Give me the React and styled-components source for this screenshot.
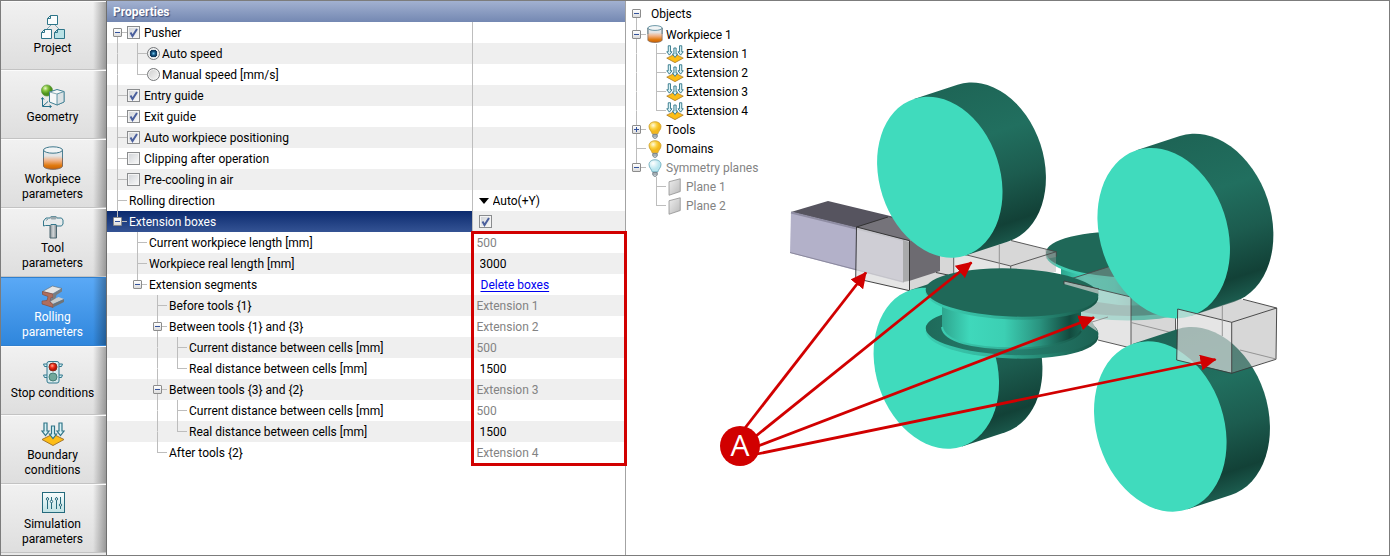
import React, { useState } from "react";
import styled, { createGlobalStyle, css } from "styled-components";

const FONT = 'Roboto, "Open Sans", sans-serif';
const LINE = "#bdbdbd";
const RED = "#d10000";

const GlobalStyle = createGlobalStyle`
  *, *::before, *::after { box-sizing: border-box; }
  body { margin: 0; background: #fff; font-family: ${FONT}; font-size: 12px; line-height: 15px; color: #000; }
  button, input, select { font: inherit; color: inherit; margin: 0; }
`;

const Window = styled.main`
  display: flex;
  min-height: 100vh;
  border: 1px solid #7c7c7c;
  background: #fff;
`;

/* ---------- sidebar ---------- */

const Sidebar = styled.nav`
  flex: 0 0 106px;
  height: calc(100vh - 2px);
  overflow: hidden;
  border-right: 1px solid #6f6f6f;
  background: #e9e9e9;
`;

const NavButton = styled.button`
  display: flex;
  flex-direction: column;
  align-items: center;
  justify-content: center;
  gap: 2px;
  width: 100%;
  height: 69px;
  padding: 0 2px 0 0;
  border: 0;
  border-top: 1px solid #fbfbfb;
  border-bottom: 1px solid #c3c3c3;
  background:
    linear-gradient(to right, transparent 92px, rgba(0, 0, 0, 0.32)),
    linear-gradient(#f1f1f1, #dedede);
  ${(p) =>
    p.$active &&
    css`
      color: #fff;
      border-color: #2f7fce;
      background:
        linear-gradient(to right, transparent 92px, rgba(0, 0, 0, 0.32)),
        linear-gradient(#5aa9f6, #2f86dc);
    `}
`;

const NavIcon = styled.svg`
  width: 24px;
  height: 24px;
  flex: none;
`;

const NavText = styled.span`
  width: 85px;
  text-align: center;
`;

/* ---------- property sheet ---------- */

const Properties = styled.section`
  position: relative;
  flex: 0 0 519px;
  border-right: 1px solid #a3a3a3;
`;

const PanelTitle = styled.h2`
  margin: 0;
  height: 21px;
  padding: 4px 6px 2px;
  font-size: 12px;
  line-height: 15px;
  color: #fff;
  text-shadow: 1px 1px 1px #3c4c78;
  background: linear-gradient(#a2b1d1, #7488b2);
`;

const Sheet = styled.table`
  width: 100%;
  table-layout: fixed;
  border-collapse: collapse;
`;

const SheetRow = styled.tr`
  height: 21px;
  background: #fff;
  &:nth-child(even) { background: #efefef; }
`;

const NameCell = styled.th`
  width: 365px;
  height: 21px;
  padding: 0;
  font-weight: 400;
  text-align: left;
  border-right: 1px solid #bdbdbd;
  ${(p) =>
    p.$selected &&
    css`
      color: #fff;
      background: linear-gradient(#0b2a6e, #345394);
    `}
`;

const ValueCell = styled.td`
  height: 21px;
  padding: 0 0 0 ${(p) => (p.$muted ? 4 : 6)}px;
  color: ${(p) => (p.$muted ? "#838383" : "#000")};
`;

const ValueText = styled.span`
  display: block;
  padding-top: 2px;
`;

const Line = styled.div`
  display: flex;
  align-items: center;
  height: ${(p) => p.$height || 21}px;
`;

const Guide = styled.span`
  flex: none;
  display: flex;
  align-items: center;
  align-self: stretch;
  width: 20px;
  padding-left: 6px;
  background-repeat: no-repeat;
  background-image: linear-gradient(${LINE}, ${LINE}), linear-gradient(${LINE}, ${LINE}), linear-gradient(${LINE}, ${LINE});
  background-position: 10px 0, 10px 100%, 10px 50%;
  background-size:
    1px ${(p) => (p.$up ? "50%" : "0")},
    1px ${(p) => (p.$down ? "50%" : "0")},
    ${(p) => (p.$across ? "10px 1px" : "0 0")};
`;

const ExpandButton = styled.button`
  display: block;
  width: 9px;
  height: 9px;
  padding: 0;
  border: 1px solid #8c8c8c;
  border-radius: 1px;
  background: linear-gradient(#fff, #dcdcdc);
  svg { display: block; width: 7px; height: 7px; }
`;

const Label = styled.label`
  display: flex;
  align-items: center;
`;

const Text = styled.span`
  padding: 2px 0 0 ${(p) => p.$pad || 2}px;
  white-space: nowrap;
  color: ${(p) => (p.$muted ? "#838383" : "inherit")};
`;

const CheckFrame = styled.span`
  display: grid;
  width: 13px;
  height: 13px;
  > * { grid-area: 1 / 1; }
  svg { width: 13px; height: 13px; pointer-events: none; }
`;

const CheckInput = styled.input`
  appearance: none;
  width: 13px;
  height: 13px;
  border: 1px solid #8a8c8e;
  background: linear-gradient(135deg, #cfd2d6, #fafafa);
  box-shadow: inset 0 0 0 1px #f4f4f4;
`;

const RadioInput = styled.input`
  appearance: none;
  width: 13px;
  height: 13px;
  border: 1px solid #77797b;
  border-radius: 50%;
  box-shadow: inset 0 0 0 1px #f4f4f4;
  background: linear-gradient(135deg, #cdcdcd, #f8f8f8);
  &:checked {
    background: radial-gradient(circle at 50% 50%, #6fc6ee 0, #14527f 2px, #0b2b4a 4px, #dfe3e6 4px);
  }
`;

const Picker = styled.div`
  display: flex;
  align-items: center;
  gap: 4px;
  svg { width: 10px; height: 6px; }
`;

const PickerSelect = styled.select`
  appearance: none;
  height: 19px;
  padding: 2px 0 0;
  border: 0;
  background: transparent;
`;

const NumberBox = styled.input`
  display: block;
  width: 100%;
  height: 17px;
  padding: 0 1px;
  border: 0;
  background: transparent;
`;

const BoxesLink = styled.a`
  padding-left: 2px;
  color: #0000f0;
  text-underline-offset: 2px;
`;

const Highlight = styled.div`
  position: absolute;
  left: 364px;
  right: -2px;
  top: 230px;
  height: 235px;
  border: 3px solid ${RED};
  pointer-events: none;
  z-index: 1;
`;

/* ---------- viewer ---------- */

const Viewer = styled.section`
  flex: 1;
  min-width: 0;
  display: grid;
  > * { grid-area: 1 / 1; }
`;

const Scene = styled.svg`
  width: 100%;
  height: 100%;
`;

const ObjectTree = styled.div`
  justify-self: start;
  align-self: start;
  padding-top: 1px;
`;

const TreeIcon = styled.svg`
  flex: none;
  width: 18px;
  height: 18px;
`;

/* ---------- icons ---------- */

const CylinderShape = () => (
  <>
    <path d="M2.5 4v16c0 1.800 4.200 3.300 9.500 3.300s9.500-1.500 9.500-3.300V4z" fill="url(#metal)" stroke="#7d6a60" />
    <path d="M2.500 12V4M21.500 12V4" stroke="#4d7f93" />
    <ellipse cx="12" cy="4" rx="9.500" ry="3.200" fill="#f1f4f5" stroke="#3f788c" />
  </>
);

const LoadShape = () => (
  <>
    <path d="M12 12 23 17.500 12 23.500 1 17.500z" fill="#fdbd16" stroke="#a6762a" />
    {[[4.500, 1], [12, 4], [19.500, 1]].map(([x, y]) => (
      <path key={x} d={`M${x - 1.500} ${y}h3v8h2l-3.500 4.500-3.500-4.500h2z`} fill="#d8f2f6" stroke="#2f7487" strokeWidth="1.200" />
    ))}
  </>
);

const BulbShape = ({ lit }) => (
  <>
    <path
      d="M8 17c0-3-4-5-4-9.500C4 3.500 7.500 1 12 1s8 2.500 8 6.500c0 4.500-4 6.500-4 9.500z"
      fill={lit ? "url(#bulbOn)" : "url(#bulbOff)"}
      stroke={lit ? "#c79a2c" : "#5b9fb2"}
    />
    <path d="M9 18h6v3l-1.500 2h-3L9 21z" fill="#d5dadd" stroke="#5c6c75" />
    <path d="M9 20h6" stroke="#5c6c75" />
  </>
);

const icons = {
  project: (
    <g stroke="#2d7589">
      <path d="M10 10 5 15M14 10l5 5" stroke="#7fa5b1" />
      <path d="M9.500.5h7v9h-10v-6z" fill="#fbfdfd" />
      <path d="M3.500 14.500h7v9H.5v-6z" fill="#fbfdfd" />
      <path d="M16.500 14.500h7v9h-10v-6z" fill="#b9e2e6" />
      <path d="M9.500.5v3h-3M3.500 14.500v3h-3M16.500 14.500v3h-3" fill="none" />
    </g>
  ),
  geometry: (
    <>
      <circle cx="6" cy="6.500" r="5.600" fill="url(#ball)" stroke="#58963a" strokeWidth=".6" />
      <path d="M8.500 8 16 5.500l7 2V18l-7 3-7.500-3z" fill="#f6f8f8" stroke="#3f7f93" />
      <path d="M16 10v11l7-3V7.500z" fill="#dbe2e4" stroke="#3f7f93" strokeWidth=".8" />
      <path d="M8.500 8 16 10" fill="none" stroke="#8cadb7" />
      <path d="M1.500 14v8.500H10M0 15.500 1.500 13.500 3 15.500M8.500 21l2 1.500-2 1.500M2 22l5-4.500" fill="none" stroke="#26708a" />
    </>
  ),
  workpiece: <CylinderShape />,
  tool: (
    <>
      <path d="M9 9h6.500v14H9z" fill="url(#steel)" stroke="#4c6670" />
      <path d="M5 3h4l1-1.500h5L16 3h4.500L22 5v4l-1.500 2H16l-1-1.500h-5L9 10.500H4.500L2.500 11V6z" fill="#e7ebec" stroke="#35788c" />
      <path d="M10 1.500h5L16 3l-1.500 1.500h-4L9 3z" fill="#9aa7ac" />
      <path d="M5 5.500 7 4" stroke="#7b98a3" fill="none" />
    </>
  ),
  rolling: (
    <>
      <path d="m1 9 3 2.500 4 1v3.500l-7 1.500V20l11 3.500v-4L8.500 17l1-4 2.500.5V10.500L2 7z" fill="#a4624f" />
      <path d="M1.500 7.500 11.500 2l9.500 2.500-9.500 5.500z" fill="#e4e5e5" stroke="#62686c" strokeWidth=".6" />
      <path d="M1.500 7.500v3L7 12.500l-1 4-5 .5v3L12 23.500V20l-3-2 1-4.500 2 .5v-4z" fill="#b06e5d" stroke="#7d4c40" strokeWidth=".6" />
      <path d="M12 10 21 4.500v3L15.500 11l-1.500 5.500L9.500 18l1-4.500 1.500.5z" fill="#787d81" />
      <path d="m9.500 17.500 5-3 3-1.500 5.500 2-11 5z" fill="#c9cbcb" />
      <path d="m12 20 11-5v3L12 23.500z" fill="#6f7478" />
    </>
  ),
  stop: (
    <>
      <path d="M6 4H2.500l1 2.500H6M6 15H2.500l1 2.500H6M18 4h3.500l-1 2.500H18M18 15h3.500l-1 2.500H18" fill="#d3edf1" stroke="#32798e" />
      <rect x="6" y="1.500" width="12" height="21.500" rx="2" fill="#d6e9ec" stroke="#32798e" />
      <circle cx="12" cy="7" r="4" fill="url(#lamp)" stroke="#8d2a1c" />
      <circle cx="12" cy="17" r="4" fill="#71a89b" stroke="#477f77" />
    </>
  ),
  boundary: <LoadShape />,
  simulation: (
    <g fill="none" stroke="#246a7c">
      <rect x="1.500" y="1.500" width="22" height="20" fill="url(#panel)" />
      <path d="M6.500 6v12M10.500 6v12M15.500 6v12M19.500 6v12" />
      <g fill="#fff">
        <circle cx="6.500" cy="8" r="1.200" />
        <circle cx="10.500" cy="10.500" r="1.200" />
        <circle cx="15.500" cy="8" r="1.200" />
        <circle cx="19.500" cy="14" r="1.200" />
      </g>
    </g>
  ),
  bulbOn: <BulbShape lit />,
  bulbOff: <BulbShape />,
  plane: <path d="M4 5 19 1v17L4 23z" fill="url(#planeFill)" stroke="#8c8c8c" />,
};

const Gradients = () => (
  <defs>
    <linearGradient id="metal" x2="0" y2="1">
      <stop offset=".3" stopColor="#e3e5e6" />
      <stop offset=".55" stopColor="#f1b184" />
      <stop offset=".8" stopColor="#e07a10" />
      <stop offset="1" stopColor="#c75f05" />
    </linearGradient>
    <linearGradient id="steel">
      <stop stopColor="#808b90" />
      <stop offset=".5" stopColor="#d3d7d9" />
      <stop offset="1" stopColor="#7f898e" />
    </linearGradient>
    <radialGradient id="ball" cx=".35" cy=".3">
      <stop stopColor="#eaf8c8" />
      <stop offset=".5" stopColor="#84c43c" />
      <stop offset="1" stopColor="#4c8f1d" />
    </radialGradient>
    <radialGradient id="lamp" cx=".4" cy=".35">
      <stop stopColor="#ffb09a" />
      <stop offset=".5" stopColor="#f4321c" />
      <stop offset="1" stopColor="#b81407" />
    </radialGradient>
    <radialGradient id="bulbOn" cx=".35" cy=".3">
      <stop stopColor="#fffbe0" />
      <stop offset=".6" stopColor="#fbd242" />
      <stop offset="1" stopColor="#f3b81d" />
    </radialGradient>
    <radialGradient id="bulbOff" cx=".35" cy=".3">
      <stop stopColor="#ffffff" />
      <stop offset="1" stopColor="#b9e6ef" />
    </radialGradient>
    <linearGradient id="panel" x2="0" y2="1">
      <stop stopColor="#f8fcfc" />
      <stop offset="1" stopColor="#bfe2e4" />
    </linearGradient>
    <linearGradient id="planeFill" x2="1" y2="1">
      <stop stopColor="#eeeeee" />
      <stop offset="1" stopColor="#b9b9b9" />
    </linearGradient>
    <linearGradient id="rollSide" gradientUnits="userSpaceOnUse" x1="0" y1="-85" x2="0" y2="85">
      <stop stopColor="#1e6556" />
      <stop offset=".35" stopColor="#216f5f" />
      <stop offset=".62" stopColor="#1c5c4f" />
      <stop offset=".88" stopColor="#124137" />
      <stop offset="1" stopColor="#1b5a4d" />
    </linearGradient>
    <linearGradient id="hub">
      <stop stopColor="#2ea58e" />
      <stop offset=".2" stopColor="#3fd8bb" />
      <stop offset=".45" stopColor="#3ccfb3" />
      <stop offset=".7" stopColor="#2a9480" />
      <stop offset=".92" stopColor="#124a3e" />
      <stop offset="1" stopColor="#1a6252" />
    </linearGradient>
    <linearGradient id="flange">
      <stop stopColor="#1f6a5a" />
      <stop offset=".5" stopColor="#258170" />
      <stop offset="1" stopColor="#1c6253" />
    </linearGradient>
    <linearGradient id="rim">
      <stop stopColor="#3bcbb0" />
      <stop offset=".4" stopColor="#34b69d" />
      <stop offset="1" stopColor="#165345" />
    </linearGradient>
    <marker id="head" viewBox="0 0 16 16" refX="15" refY="8" markerWidth="16" markerHeight="16" markerUnits="userSpaceOnUse" orient="auto">
      <path d="M0 0 16 8 0 16z" fill={RED} />
    </marker>
  </defs>
);

/* ---------- shared parts ---------- */

/* Each letter is one indent column: v through line, t branch, l last branch,
   r root node, f first node, m middle node, e last node, _ blank. */
const guideKinds = {
  v: { $up: true, $down: true },
  t: { $up: true, $down: true, $across: true },
  l: { $up: true, $across: true },
  f: { $down: true, $across: true, box: true },
  r: { $down: true, box: true },
  m: { $up: true, $down: true, $across: true, box: true },
  e: { $up: true, $across: true, box: true },
  _: {},
};

const Guides = ({ code, name, open = true }) =>
  code.split("").map((c, i) => {
    const { box, ...lines } = guideKinds[c];
    return (
      <Guide key={i} {...lines}>
        {box && (
          <ExpandButton type="button" aria-label={`${open ? "Collapse" : "Expand"} ${name}`}>
            <svg viewBox="0 0 7 7" stroke="#33529c">
              <path d="M1 3.500h5" />
              {!open && <path d="M3.500 1v5" />}
            </svg>
          </ExpandButton>
        )}
      </Guide>
    );
  });

const Check = ({ initial, label }) => {
  const [on, setOn] = useState(initial);
  return (
    <CheckFrame>
      <CheckInput type="checkbox" aria-label={label} checked={on} onChange={() => setOn(!on)} />
      {on && (
        <svg viewBox="0 0 13 13">
          <path d="M3.500 6.500 5.500 10 10 3" fill="none" stroke="#4a5f9d" strokeWidth="2" />
        </svg>
      )}
    </CheckFrame>
  );
};

/* ---------- data ---------- */

const navItems = [
  ["project", "Project"],
  ["geometry", "Geometry"],
  ["workpiece", "Workpiece parameters"],
  ["tool", "Tool parameters"],
  ["rolling", "Rolling parameters"],
  ["stop", "Stop conditions"],
  ["boundary", "Boundary conditions"],
  ["simulation", "Simulation parameters"],
];

const properties = [
  { g: "f", name: "Pusher", check: true },
  { g: "vt", name: "Auto speed", radio: true },
  { g: "vl", name: "Manual speed [mm/s]", radio: false },
  { g: "t", name: "Entry guide", check: true },
  { g: "t", name: "Exit guide", check: true },
  { g: "t", name: "Auto workpiece positioning", check: true },
  { g: "t", name: "Clipping after operation", check: false },
  { g: "t", name: "Pre-cooling in air", check: false },
  { g: "t", name: "Rolling direction", kind: "select", value: "Auto(+Y)" },
  { g: "e", name: "Extension boxes", kind: "check", selected: true },
  { g: "_t", name: "Current workpiece length [mm]", kind: "muted", value: "500" },
  { g: "_t", name: "Workpiece real length [mm]", kind: "number", value: "3000" },
  { g: "_e", name: "Extension segments", kind: "link", value: "Delete boxes" },
  { g: "__t", name: "Before tools {1}", kind: "muted", value: "Extension 1" },
  { g: "__m", name: "Between tools {1} and {3}", kind: "muted", value: "Extension 2" },
  { g: "__vt", name: "Current distance between cells [mm]", kind: "muted", value: "500" },
  { g: "__vl", name: "Real distance between cells [mm]", kind: "number", value: "1500" },
  { g: "__m", name: "Between tools {3} and {2}", kind: "muted", value: "Extension 3" },
  { g: "__vt", name: "Current distance between cells [mm]", kind: "muted", value: "500" },
  { g: "__vl", name: "Real distance between cells [mm]", kind: "number", value: "1500" },
  { g: "__l", name: "After tools {2}", kind: "muted", value: "Extension 4" },
];

const objects = [
  { g: "m", icon: "workpiece", name: "Workpiece 1", height: 20 },
  { g: "vt", icon: "boundary", name: "Extension 1" },
  { g: "vt", icon: "boundary", name: "Extension 2" },
  { g: "vt", icon: "boundary", name: "Extension 3" },
  { g: "vl", icon: "boundary", name: "Extension 4" },
  { g: "m", icon: "bulbOn", name: "Tools", closed: true },
  { g: "t", icon: "bulbOn", name: "Domains" },
  { g: "e", icon: "bulbOff", name: "Symmetry planes", muted: true },
  { g: "_t", icon: "plane", name: "Plane 1", muted: true },
  { g: "_l", icon: "plane", name: "Plane 2", muted: true },
];

const PropertyName = ({ row }) => {
  if ("check" in row)
    return (
      <Label>
        <Check initial={row.check} label={row.name} />
        <Text $pad={4}>{row.name}</Text>
      </Label>
    );
  if ("radio" in row)
    return (
      <Label>
        <RadioInput type="radio" name="speed" defaultChecked={row.radio} />
        <Text>{row.name}</Text>
      </Label>
    );
  return <Text>{row.name}</Text>;
};

const PropertyValue = ({ row }) => {
  switch (row.kind) {
    case "select":
      return (
        <Picker>
          <svg viewBox="0 0 10 6"><path d="M0 0h10L5 6z" /></svg>
          <PickerSelect aria-label={row.name}>
            <option>{row.value}</option>
          </PickerSelect>
        </Picker>
      );
    case "check":
      return <Check initial label={row.name} />;
    case "number":
      return <NumberBox type="text" aria-label={row.name} defaultValue={row.value} />;
    case "link":
      return <ValueText><BoxesLink href="#delete-boxes">{row.value}</BoxesLink></ValueText>;
    default:
      return row.value ? <ValueText>{row.value}</ValueText> : null;
  }
};

/* ---------- 3D scene ---------- */

const Roll = ({ x, y, rx, ry }) => (
  <g transform={`translate(${x} ${y}) rotate(-18.2)`}>
    <path d={`M0 ${-ry}H45.700A${rx} ${ry} 0 0 1 45.700 ${ry}H0z`} fill="url(#rollSide)" />
    <ellipse rx={rx} ry={ry} fill="#40dbbd" />
  </g>
);

const Glass = ({ points, tone = "side" }) => (
  <polygon points={points} fill={tone === "front" ? "#dadada" : "#a0a0a0"} fillOpacity={tone === "front" ? 0.71 : 0.42} />
);

const RollingScene = () => (
  <Scene viewBox="626 1 763 554" preserveAspectRatio="xMinYMin meet" role="img" aria-label="Rolling mill with extension boxes marked A">
    <Gradients />

    {/* rear horizontal roll */}
    <ellipse cx="1128" cy="297" rx="82" ry="23.500" fill="#40cdb2" />
    <ellipse cx="1128" cy="293" rx="82" ry="23" fill="#258170" />
    <path d="M1061 262h120v38q-60 14-120-8z" fill="url(#hub)" />
    <ellipse cx="1128" cy="257" rx="82" ry="23.500" transform="rotate(1.500 1128 257)" fill="#40cdb2" />
    <ellipse cx="1128" cy="254.500" rx="82" ry="23" transform="rotate(1.500 1128 254)" fill="#1f6858" />

    {/* box between the horizontal rolls and the last stand */}
    <Glass points="1064,281 1108,267 1176,285 1176,333 1131,348 1131,297" />
    <Glass tone="front" points="1064,281 1131,297 1131,348 1064,332" />
    <g fill="none" stroke="#4a4a4a" strokeWidth=".9">
      <path d="M1064 281 1108 267M1064 281 1131 297V348M1098 340 1131 348M1175.500 318v13" />
      <path d="M1092 322 1108 317M1131 322.500 1171 332.500M1131 348 1171 334" stroke="#8c8c8c" />
    </g>

    {/* workpiece */}
    <polygon points="791,212 828,201 940,228 909,241" fill="#56545f" />
    <polygon points="791,212 909,241 904,283 790,253" fill="#b3b1c9" />
    <path d="M791 212.500 905 240.500" stroke="#8f8da3" strokeWidth="2" />
    <path d="M790 252.500 904 282" stroke="#8a889d" />
    <Glass points="857,227 888,217 945,231 909,241" />
    <Glass points="909,241 953,230 953,274 909,291" />
    <polygon points="909,241 940,229 940,271 909,281" fill="#6d6b71" />
    <Glass tone="front" points="857,227 909,241 909,291 856,278" />
    <polygon points="903,240 909,242 909,281 903,282" fill="#a9aaab" />
    <g fill="none" stroke="#2e2e2e" strokeWidth=".9">
      <path d="M888 217 856.500 227 909.500 240.700V290.700L855.700 278.500 856.500 227M936 272.500 948 275" />
    </g>

    {/* box in front of the first stand */}
    <Glass points="1010.700,266 1056,252 1056,272 1010.700,272" />
    <Glass points="953.700,251.700 1013,240.700 1056,252 1010.700,266" />
    <Glass points="911,290 953,274 953,282 925,292" />
    <Glass tone="front" points="953.700,251.700 1010.700,266 1010.700,278 953.700,278" />
    <Glass points="1045,249 1056,252 1056,257 1046,259" />
    <g fill="none" stroke="#4a4a4a" strokeWidth=".9">
      <path d="M953.700 275V251.700L1010.700 266 1056.300 251.700 1011 240.500M1010.700 266v6M1056.300 251.700v5" />
      <path d="M999.300 245v24" stroke="#8c8c8c" />
    </g>

    <Roll x={939.8} y={177.200} rx={60.200} ry={82.400} />
    <Roll x={936.3} y={368.200} rx={60.200} ry={82.400} />

    {/* front horizontal roll */}
    <g transform="rotate(2 1012 334)">
      <ellipse cx="1012" cy="334" rx="86.400" ry="24.500" fill="url(#rim)" />
      <ellipse cx="1012" cy="331" rx="86.400" ry="24" fill="url(#flange)" />
    </g>
    <path d="M942 300V327C944 342 975 348 1012 348.500 1045 349 1075 342 1081 331V305z" fill="url(#hub)" />
    <path d="M942 327C944 342 975 348 1012 348.500 1045 349 1075 342 1081 331" fill="none" stroke="url(#rim)" strokeWidth="2" />
    <g transform="rotate(2 1012 293)">
      <ellipse cx="1012" cy="295" rx="86.400" ry="24.500" fill="url(#rim)" />
      <ellipse cx="1012" cy="292.500" rx="86.400" ry="24" fill="#1f6858" />
    </g>
    <polygon points="1064,281 1098,289 1099,294 1064,284" fill="#9db3ad" />
    <polygon points="1083,322 1090,318 1098,332 1092,328" fill="#a5b8b3" />
    <path d="M1064 284.500V281L1099 289" fill="none" stroke="#3a3a3a" strokeWidth=".9" />

    <Roll x={1160.3} y={426.500} rx={63.600} ry={87.200} />
    <Roll x={1163.7} y={233.200} rx={63.600} ry={87.200} />

    {/* box after the last stand */}
    <Glass points="1178,309 1196,314 1240,299 1277,308 1232,322" />
    <Glass points="1232,322 1277,308 1276,359 1232,373" />
    <Glass tone="front" points="1178,309 1232,322 1232,373 1177,360" />
    <g fill="none" stroke="#3a3a3a" strokeWidth=".9">
      <path d="M1177.700 309 1231.700 322.300 1276.700 308 1243 299.300M1177.700 309 1176.700 360 1231.700 373.300 1276 359.300 1276.700 308M1231.700 322.300v51" />
      <path d="M1222.300 306v30M1240 350 1276 359" stroke="#8c8c8c" />
    </g>

    {/* callout */}
    <g stroke={RED} strokeWidth="2.800">
      <path d="M745 428 866 272.500" markerEnd="url(#head)" />
      <path d="M756 436 971.500 262.500" markerEnd="url(#head)" />
      <path d="M758 446 1094 317.500" markerEnd="url(#head)" />
      <path d="M757 454 1215.500 359.500" markerEnd="url(#head)" />
    </g>
    <circle cx="740" cy="446" r="20" fill={RED} />
    <text x="740" y="456" textAnchor="middle" fontFamily='"Open Sans", sans-serif' fontSize="30" fill="#fff">A</text>
  </Scene>
);

export default function App() {
  return (
    <Window>
      <GlobalStyle />
      <Sidebar aria-label="Operation steps">
        {navItems.map(([icon, name]) => (
          <NavButton key={icon} type="button" $active={icon === "rolling"}>
            <NavIcon viewBox="0 0 24 24" fill="none">{icons[icon]}</NavIcon>
            <NavText>{name}</NavText>
          </NavButton>
        ))}
      </Sidebar>

      <Properties>
        <PanelTitle>Properties</PanelTitle>
        <Sheet>
          <tbody>
            {properties.map((row, i) => (
              <SheetRow key={i}>
                <NameCell scope="row" $selected={row.selected}>
                  <Line>
                    <Guides code={row.g} name={row.name} />
                    <PropertyName row={row} />
                  </Line>
                </NameCell>
                <ValueCell $muted={row.kind === "muted"}>
                  <PropertyValue row={row} />
                </ValueCell>
              </SheetRow>
            ))}
          </tbody>
        </Sheet>
        <Highlight />
      </Properties>

      <Viewer>
        <RollingScene />
        <ObjectTree>
          <Line $height={22}>
            <Guides code="r" name="Objects" />
            <Text $pad={5}>Objects</Text>
          </Line>
          {objects.map((o) => (
            <Line key={o.name} $height={o.height || 19}>
              <Guides code={o.g} name={o.name} open={!o.closed} />
              <TreeIcon viewBox="0 0 24 24" fill="none">{icons[o.icon]}</TreeIcon>
              <Text $muted={o.muted}>{o.name}</Text>
            </Line>
          ))}
        </ObjectTree>
      </Viewer>
    </Window>
  );
}
